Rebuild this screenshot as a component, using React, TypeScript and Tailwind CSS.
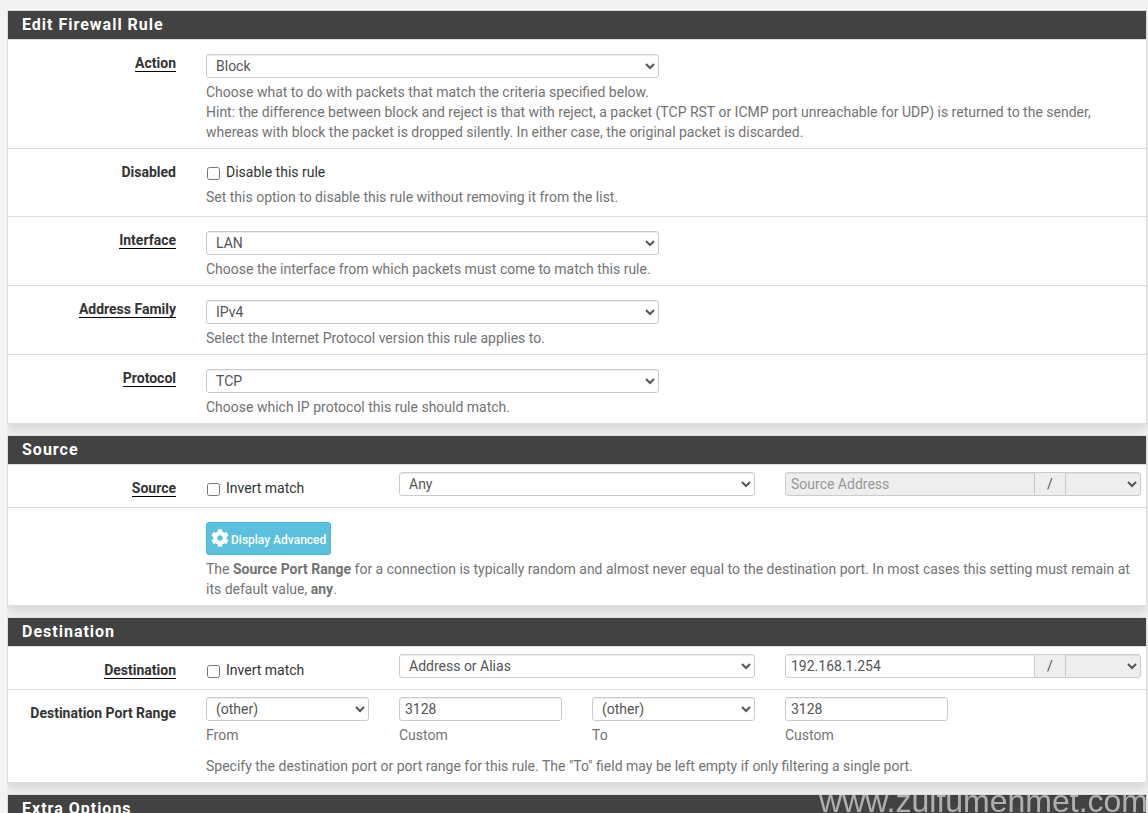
import { useState } from 'react';
import type { ReactNode } from 'react';
import { FaCog } from 'react-icons/fa';

const control =
  'h-6 rounded-[3px] border border-[#ccc] bg-white px-[5px] text-[14px] text-[#555] shadow-[inset_0_1px_1px_rgba(0,0,0,0.075)] outline-none focus:border-sky-400';

function Panel({ title, children }: { title: string; children?: ReactNode }) {
  return (
    <section className="mb-[11px] border border-[#ddd] bg-white shadow-[0_6px_10px_rgba(0,0,0,0.12)]">
      <h2 className="h-7 bg-[#424242] pl-[14px] text-[16px] leading-7 font-bold tracking-[1px] text-white">{title}</h2>
      <div className="divide-y divide-[#ddd] border-t border-[#ddd]">{children}</div>
    </section>
  );
}

type RowProps = {
  label?: string;
  htmlFor?: string;
  required?: boolean;
  className?: string;
  children: ReactNode;
};

function Row({ label, htmlFor, required, className = 'pt-[14px]', children }: RowProps) {
  return (
    <div className="overflow-hidden">
      <div className="-mx-[10px] grid grid-cols-6">
        <div className="px-[15px] pt-[13px] text-right">
          {label && (
            <label htmlFor={htmlFor} className="inline-block leading-5 font-bold whitespace-nowrap">
              <span className={required ? 'inline-block h-[19px] border-b border-black' : ''}>{label}</span>
            </label>
          )}
        </div>
        <div className={`col-span-5 pb-[6px] ${className}`}>{children}</div>
      </div>
    </div>
  );
}

function Help({ children }: { children: ReactNode }) {
  return <p className="mt-1 px-[15px] leading-5 text-[#737373]">{children}</p>;
}

function SelectRow({ id, label, options, children }: { id: string; label: string; options: string[]; children: ReactNode }) {
  return (
    <Row label={label} htmlFor={id} required>
      <div className="grid grid-cols-2">
        <div className="px-[15px]">
          <select id={id} className={`${control} block w-full`}>
            {options.map((o) => <option key={o}>{o}</option>)}
          </select>
        </div>
      </div>
      <Help>{children}</Help>
    </Row>
  );
}

function Check({ id, children }: { id: string; children: ReactNode }) {
  return (
    <label className="flex items-center px-[15px] leading-5">
      <input id={id} type="checkbox" className="mt-[2px] mr-[6px] ml-[1px] h-[13px] w-[13px]" />
      {children}
    </label>
  );
}

type AddressProps = { id: string; label: string; type: string; address: string; placeholder: string; disabled?: boolean };

function AddressRow({ id, label, type, address, placeholder, disabled }: AddressProps) {
  const [value, setValue] = useState(address);

  return (
    <Row label={label} htmlFor={`${id}not`} required className="pt-[7px]">
      <div className="grid min-h-[29px] grid-cols-5">
        <div className="pt-[6px]"><Check id={`${id}not`}>Invert match</Check></div>
        <div className="col-span-2 px-[15px]">
          <select aria-label={`${label} type`} defaultValue={type} className={`${control} block w-full`}>
            <option>Any</option>
            <option>Address or Alias</option>
          </select>
        </div>
        <div className="col-span-2 flex px-[15px]">
          <input
            aria-label={placeholder}
            value={value}
            onChange={(e) => setValue(e.target.value)}
            placeholder={placeholder}
            disabled={disabled}
            className={`${control} min-w-0 flex-1 rounded-r-none placeholder:text-[#999] disabled:bg-[#eee]`}
          />
          <span className="h-6 w-[30px] border-y border-[#ccc] bg-[#eee] text-center leading-[22px] text-[#555]">/</span>
          <select
            aria-label={`${label} mask`}
            disabled
            className={`${control} w-[76px] rounded-l-none disabled:bg-[#eee] disabled:opacity-100`}
          />
        </div>
      </div>
    </Row>
  );
}

const PORTS = [
  { id: 'dstbeginport', custom: 'dstbeginport_cust', label: 'From' },
  { id: 'dstendport', custom: 'dstendport_cust', label: 'To' },
];

export default function App() {
  return (
    <div className="h-screen overflow-hidden bg-[#f3f3f3] pt-[10px] pl-[7px] font-['Roboto',sans-serif] text-[14px] text-[#333]">
      <form className="overflow-hidden pr-px">
        <Panel title="Edit Firewall Rule">
          <SelectRow id="type" label="Action" options={['Block', 'Pass', 'Reject']}>
            Choose what to do with packets that match the criteria specified below.
            <br />
            Hint: the difference between block and reject is that with reject, a packet (TCP RST or ICMP port unreachable for UDP) is
            returned to the sender, whereas with block the packet is dropped silently. In either case, the original packet is discarded.
          </SelectRow>
          <Row label="Disabled" htmlFor="disabled" className="pt-[13px]">
            <Check id="disabled">Disable this rule</Check>
            <div className="pt-px pb-[3px]">
              <Help>Set this option to disable this rule without removing it from the list.</Help>
            </div>
          </Row>
          <SelectRow id="interface" label="Interface" options={['LAN', 'WAN']}>
            Choose the interface from which packets must come to match this rule.
          </SelectRow>
          <SelectRow id="ipprotocol" label="Address Family" options={['IPv4', 'IPv6', 'IPv4+IPv6']}>
            Select the Internet Protocol version this rule applies to.
          </SelectRow>
          <SelectRow id="proto" label="Protocol" options={['TCP', 'UDP', 'TCP/UDP', 'ICMP', 'Any']}>
            Choose which IP protocol this rule should match.
          </SelectRow>
        </Panel>

        <Panel title="Source">
          <AddressRow id="src" label="Source" type="Any" address="" placeholder="Source Address" disabled />
          <Row>
            <button
              type="button"
              className="ml-[15px] flex h-[33px] items-center gap-[2px] rounded-[3px] border border-[#46b8da] bg-[#5bc0de] px-1 pt-[2px] text-[12px] font-medium text-white hover:bg-[#31b0d5]"
            >
              <FaCog size={18} className="mb-1" />
              Display Advanced
            </button>
            <Help>
              The <b>Source Port Range</b> for a connection is typically random and almost never equal to the destination port. In most
              cases this setting must remain at its default value, <b>any</b>.
            </Help>
          </Row>
        </Panel>

        <Panel title="Destination">
          <AddressRow id="dst" label="Destination" type="Address or Alias" address="192.168.1.254" placeholder="Destination Address" />
          <Row label="Destination Port Range" htmlFor="dstbeginport" className="pt-[7px]">
            <div className="grid grid-cols-5 leading-5 text-[#737373]">
              {PORTS.map((p) => (
                <div key={p.id} className="col-span-2 grid grid-cols-2">
                  <div className="px-[15px]">
                    <select id={p.id} className={`${control} mb-1 block w-full`}>
                      <option>(other)</option>
                      <option>any</option>
                    </select>
                    <label htmlFor={p.id}>{p.label}</label>
                  </div>
                  <div className="px-[15px]">
                    <input id={p.custom} defaultValue="3128" className={`${control} mb-1 block w-full`} />
                    <label htmlFor={p.custom}>Custom</label>
                  </div>
                </div>
              ))}
            </div>
            <div className="pt-[7px]">
              <Help>
                Specify the destination port or port range for this rule. The "To" field may be left empty if only filtering a single port.
              </Help>
            </div>
          </Row>
        </Panel>

        <Panel title="Extra Options" />
      </form>

      <div className="pointer-events-none fixed right-0 bottom-[-6px] font-['Liberation_Sans',sans-serif] text-[32px] leading-9 text-[#eaeaea]/65">
        www.zulfumehmet.com
      </div>
    </div>
  );
}
